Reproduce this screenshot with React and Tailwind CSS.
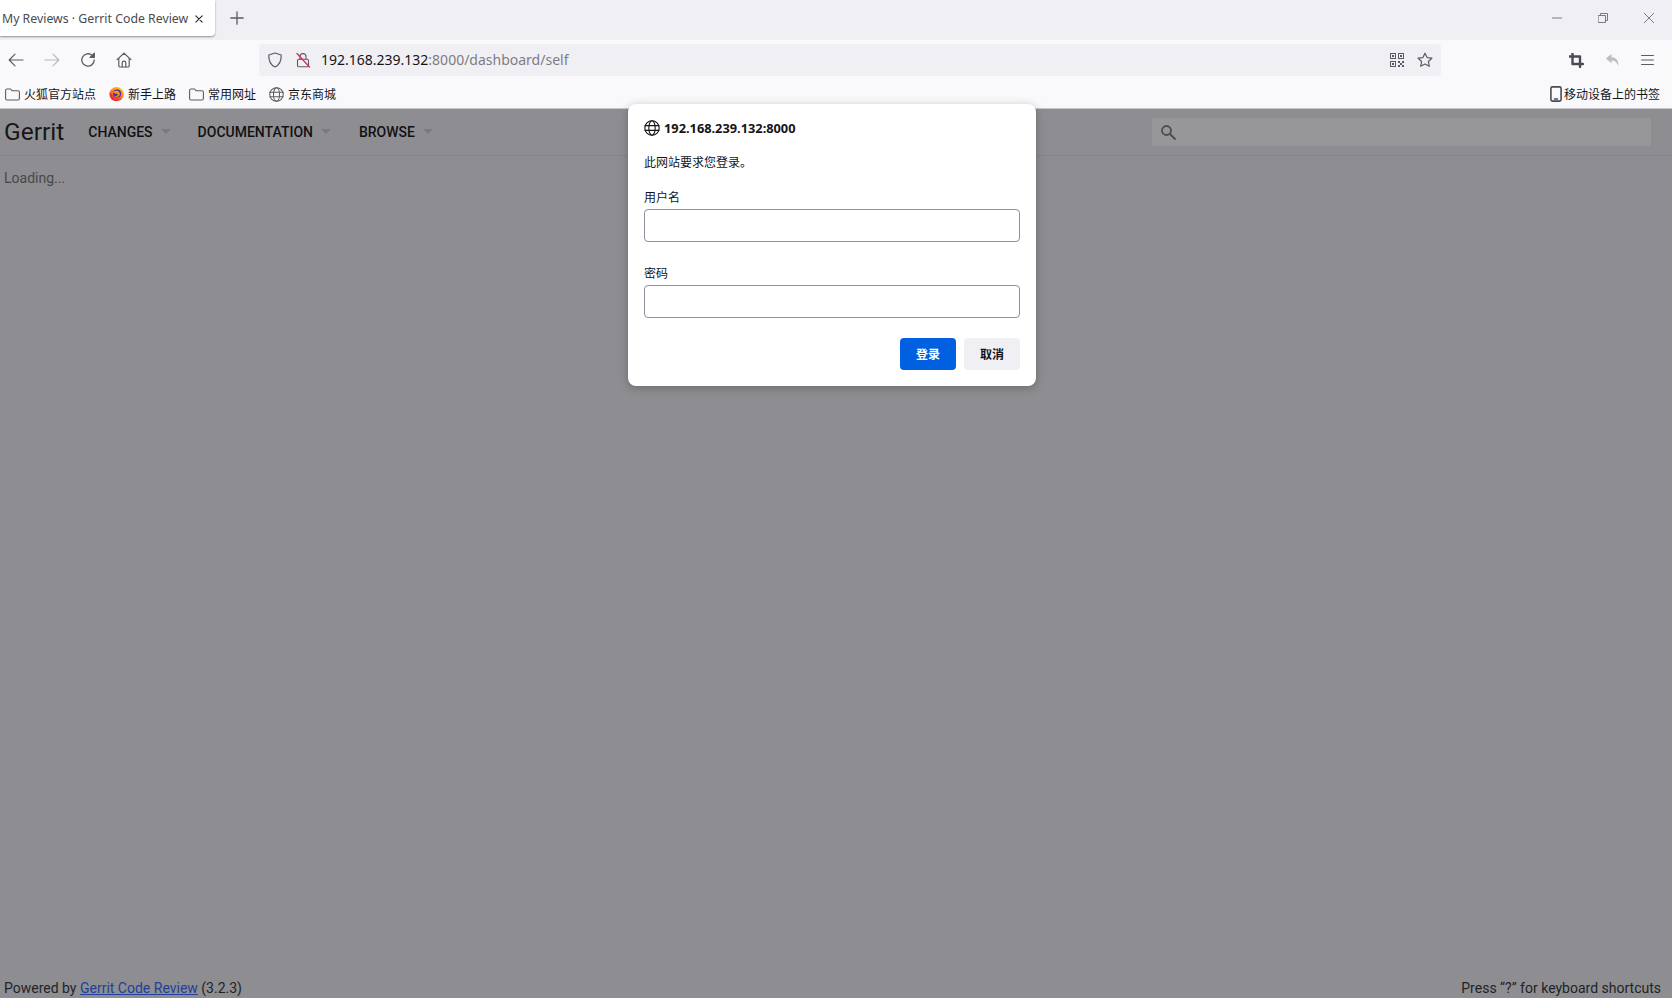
import React from "react";

const ui = { fontFamily: '"Noto Sans","Noto Sans CJK SC",sans-serif' };
const cjk = { fontFamily: '"Noto Sans CJK SC","Noto Sans",sans-serif' };
const rb = { fontFamily: 'Roboto,sans-serif' };

function Ic({ w = 16, h = 16, vb = "0 0 16 16", c = "#5b5b66", sw = 1.2, className = "", children }) {
  return (
    <svg width={w} height={h} viewBox={vb} fill="none" stroke={c} strokeWidth={sw} strokeLinecap="round" strokeLinejoin="round" className={"shrink-0 " + className}>
      {children}
    </svg>
  );
}

const Folder = () => (
  <Ic w={15} h={13} vb="0 0 15 13" sw={1.1}>
    <path d="M2 1h3.6l1.6 1.8H13a1.4 1.4 0 0 1 1.4 1.4V10.6A1.4 1.4 0 0 1 13 12H2A1.4 1.4 0 0 1 .6 10.6V2.4A1.4 1.4 0 0 1 2 1z" />
  </Ic>
);

const Globe = ({ c = "#5b5b66", s = 15 }) => (
  <Ic w={s} h={s} c={c} sw={1.1}>
    <circle cx="8" cy="8" r="7.2" />
    <ellipse cx="8" cy="8" rx="3.2" ry="7.2" />
    <path d="M1 5.6h14M1 10.4h14" />
  </Ic>
);

const FirefoxLogo = () => (
  <svg width="15" height="16" viewBox="0 0 16 16" className="shrink-0">
    <defs>
      <linearGradient id="ffg" x1="0.75" y1="0" x2="0.3" y2="1">
        <stop offset="0" stopColor="#ffc400" />
        <stop offset="0.5" stopColor="#ff7a18" />
        <stop offset="1" stopColor="#e8203f" />
      </linearGradient>
    </defs>
    <circle cx="8" cy="8.2" r="7.6" fill="url(#ffg)" />
    <circle cx="8.600" cy="7.400" r="4.300" fill="#4a2fb8" />
    <path d="M4.300 6.300c1.500-2 4.400-2.500 6.300-.8 1.400 1.500 1.200 3.800-.4 5-1.500 1-3.400.6-4.100-.5 1.300.5 3 .1 3.300-1.300.1-1-1.200-1.500-2.300-1.100z" fill="#ff9a14" />
    <path d="M.9 6.500c.4 4.500 3.300 8.300 7.600 8.500-3.600-1-5.400-3.400-5.500-6.500z" fill="#e8203f" />
  </svg>
);

const Caret = () => (
  <svg width="10" height="5" viewBox="0 0 10 5" className="ml-2 mb-[2px] shrink-0">
    <path d="M0 0h10L5 5z" fill="#7a7a7d" />
  </svg>
);

const Bookmark = ({ icon, label }) => (
  <div className="flex items-center gap-[4px]">
    {icon}
    <span className="text-[12px] leading-[18px] text-[#15141a]" style={cjk}>{label}</span>
  </div>
);

const NavItem = ({ label, className = "" }) => (
  <div className={"flex items-center " + className}>
    <span className="text-[14px] font-medium leading-[20px] text-[#111112]" style={rb}>{label}</span>
    <Caret />
  </div>
);

const Field = ({ label, top }) => (
  <>
    <div className={"text-[12px] leading-[18px] text-[#15141a] " + top} style={cjk}>{label}</div>
    <div className="mt-[3px] h-[33px] rounded-[4px] border border-[#8f8f9d] bg-white" />
  </>
);

export default function App() {
  return (
    <div className="relative flex h-screen w-full flex-col overflow-hidden bg-[#8e8e92]">
      {/* tab strip */}
      <div className="flex h-10 shrink-0 items-start bg-[#f0f0f4]">
        <div className="flex h-9 w-[215px] items-center justify-between rounded-br-[4px] bg-white pl-[2px] pr-[12px] pt-[2px] shadow-[0_1px_2px_rgba(0,0,0,0.4)]">
          <span className="whitespace-nowrap text-[12.3px] text-[#4a4a50]" style={ui}>My Reviews · Gerrit Code Review</span>
          <Ic w={8} h={8} vb="0 0 10 10" c="#2b2a33" sw={1.4}><path d="M1 1l8 8M9 1L1 9" /></Ic>
        </div>
        <div className="ml-[15px] flex h-9 items-center">
          <Ic w={14} h={14} vb="0 0 14 14" c="#5b5b66" sw={1.3}><path d="M7 .8v12.4M.8 7h12.4" /></Ic>
        </div>
        <div className="ml-auto flex h-9 items-center gap-[36px] pr-[18px]">
          <Ic w={10} h={10} vb="0 0 10 10" c="#7a7a80" sw={1}><path d="M0 5h10" /></Ic>
          <Ic w={10} h={10} vb="0 0 10 10" c="#7a7a80" sw={1}><rect x=".5" y="2.5" width="7" height="7" /><path d="M2.5 2.5v-2h7v7h-2" /></Ic>
          <Ic w={10} h={10} vb="0 0 10 10" c="#7a7a80" sw={1}><path d="M0 0l10 10M10 0L0 10" /></Ic>
        </div>
      </div>

      {/* toolbar */}
      <div className="flex h-10 shrink-0 items-center bg-[#f9f9fb]">
        <div className="ml-2 flex w-[251px] items-center gap-[20px]">
          <Ic><path d="M15 8H1.500M7 2.200L1.200 8 7 13.800" /></Ic>
          <Ic c="#b9b9c0"><path d="M1 8h13.500M9 2.200L14.800 8 9 13.800" /></Ic>
          <Ic sw={1.3}><path d="M14.200 8a6.200 6.200 0 1 1-2-4.600" /><path d="M14.300 1.200v4.200h-4.200z" fill="#5b5b66" /></Ic>
          <Ic sw={1.2}><path d="M1 7.600L8 1.200l7 6.400M2.800 6.200V14a1 1 0 0 0 1 1h8.400a1 1 0 0 0 1-1V6.200" /><path d="M6.200 15v-4a1.800 1.800 0 0 1 3.600 0v4" /></Ic>
        </div>
        <div className="flex h-8 w-[1182px] items-center rounded-[4px] bg-[#f0f0f4] pl-[8px] pr-[8px]">
          <Ic w={16} h={16}><path d="M8 1l6.200 2c.2 5-1.200 9.600-6.200 12C3 12.600 1.600 8 1.800 3z" /></Ic>
          <Ic w={16} h={16} className="ml-[12px]" sw={1.1}>
            <rect x="2.500" y="7.200" width="11" height="7.600" rx="1.400" />
            <path d="M5 7.200V4.600a3 3 0 0 1 6 0v2.600" />
            <path d="M2 1.500l12.500 13.500" stroke="#e22850" strokeWidth="1.300" />
          </Ic>
          <span className="ml-[10px] -translate-y-[1px] whitespace-nowrap text-[14px] text-[#15141a]" style={ui}>192.168.239.132<span className="text-[#7d7d85]">:8000/dashboard/self</span></span>
          <div className="ml-auto flex items-center gap-[13px]">
            <svg width="14" height="14" viewBox="0 0 14 14" className="shrink-0" fill="#5b5b66">
              <path fillRule="evenodd" d="M0 0h6v6H0zM1 1v4h4V1zM8 0h6v6H8zM9 1v4h4V1zM0 8h6v6H0zM1 9v4h4V9z" />
              <path d="M2 2h2v2H2zM10 2h2v2h-2zM2 10h2v2H2zM8 8h2v2H8zM10 10h2v2h-2zM12 8h2v2h-2zM8 12h2v2H8zM12 12h2v2h-2z" />
            </svg>
            <Ic w={16} h={16} sw={1.2}><path d="M8 1.200l2.100 4.400 4.800.6-3.500 3.300.9 4.800L8 12l-4.300 2.300.9-4.800L1.100 6.200l4.800-.6z" /></Ic>
          </div>
        </div>
        <div className="ml-[128px] flex items-center gap-[21px]">
          <Ic w={15} h={15} vb="0 0 15 15" sw={2.4} c="#4a4a55"><path d="M3.500 .5v10.500h10.500M.5 3.500h10.500v10.500" /></Ic>
          <svg width="15" height="14" viewBox="0 0 15 14" className="shrink-0"><path d="M6.500 1L.8 5.600l5.700 4.600V7.400c3 0 5 .8 6.700 5.600.6-5-1.400-8.400-6.700-8.800z" fill="#bdbdc2" /></svg>
          <Ic w={13} h={12} vb="0 0 13 12" sw={1.2}><path d="M.6 1.500h11.800M.6 6h11.800M.6 10.500h11.800" /></Ic>
        </div>
      </div>

      {/* bookmarks */}
      <div className="flex h-[29px] shrink-0 items-center border-b border-[#c8c8cc] bg-[#f9f9fb] pl-[5px] pr-[12px]">
        <Bookmark icon={<Folder />} label="火狐官方站点" />
        <div className="ml-[13px]"><Bookmark icon={<FirefoxLogo />} label="新手上路" /></div>
        <div className="ml-[13px]"><Bookmark icon={<Folder />} label="常用网址" /></div>
        <div className="ml-[13px]"><Bookmark icon={<Globe />} label="京东商城" /></div>
        <div className="ml-auto flex items-center gap-[2px]">
          <Ic w={12} h={16} vb="0 0 12 16" sw={1.6} c="#4a4a55"><rect x=".9" y=".9" width="10.200" height="14.200" rx="1.600" /><path d="M4.500 13h3" /></Ic>
          <span className="text-[12px] leading-[18px] text-[#15141a]" style={cjk}>移动设备上的书签</span>
        </div>
      </div>

      {/* page */}
      <div className="flex min-h-0 flex-1 flex-col" style={rb}>
        <div className="flex h-[47px] shrink-0 items-center border-b border-[#858589] pl-1">
          <span className="text-[24.500px] leading-[32px] text-[#161617]">Gerrit</span>
          <NavItem label="CHANGES" className="ml-6" />
          <NavItem label="DOCUMENTATION" className="ml-[27px]" />
          <NavItem label="BROWSE" className="ml-[28px]" />
          <div className="ml-auto mr-[21px] flex h-7 w-[499px] items-center rounded-[2px] bg-[#97979a] pl-[8px]">
            <Ic w={16} h={16} vb="0 0 16 16" c="#4e4e50" sw={1.8}><circle cx="6.500" cy="6.500" r="4.500" /><path d="M10 10l5 5" /></Ic>
          </div>
        </div>
        <div className="pl-1 pt-[12px] text-[14px] leading-[20px] text-[#47474a]">Loading...</div>
        <div className="mt-auto flex h-5 items-center justify-between pl-1 pr-[11px] text-[14px] text-[#232325]">
          <span>Powered by <span className="text-[#21409a] underline">Gerrit Code Review</span> (3.2.3)</span>
          <span>Press “?” for keyboard shortcuts</span>
        </div>
      </div>

      {/* auth dialog */}
      <div className="absolute left-[628px] top-[104px] h-[282px] w-[408px] rounded-[8px] bg-white px-4 pt-[15px] shadow-[0_2px_10px_rgba(0,0,0,0.25)]">
        <div className="flex h-[18px] items-center gap-[4px]">
          <Globe c="#15141a" s={16} />
          <span className="text-[12.800px] font-bold leading-[18px] text-[#15141a]" style={ui}>192.168.239.132:8000</span>
        </div>
        <div className="mt-4 text-[12px] leading-[18px] text-[#15141a]" style={cjk}>此网站要求您登录。</div>
        <Field label="用户名" top="mt-[17px]" />
        <Field label="密码" top="mt-[22px]" />
        <div className="mt-5 flex justify-end gap-2">
          <div className="flex h-8 w-14 items-center justify-center rounded-[4px] bg-[#0060df] text-[12px] font-bold text-white" style={cjk}>登录</div>
          <div className="flex h-8 w-14 items-center justify-center rounded-[4px] bg-[#f0f0f4] text-[12px] font-bold text-[#15141a]" style={cjk}>取消</div>
        </div>
      </div>
    </div>
  );
}
